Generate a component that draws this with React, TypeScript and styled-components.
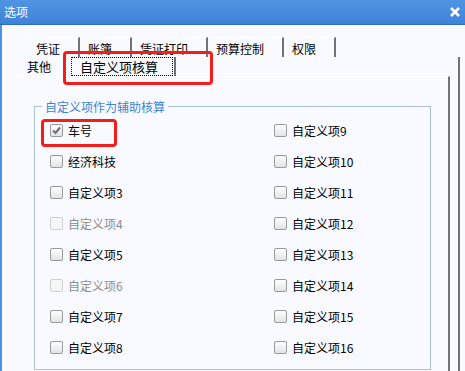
import { createGlobalStyle, styled } from "styled-components";

const GlobalStyle = createGlobalStyle`
  html, body {
    margin: 0;
    padding: 0;
    background: #f8faff;
  }
  body {
    font-family: "Noto Sans CJK SC", "Noto Sans", sans-serif;
    font-size: 12px;
    color: #000;
  }
`;

const topTabs = ["凭证", "账簿", "凭证打印", "预算控制", "权限"];

const items = [
  { label: "车号", checked: true },
  { label: "自定义项9" },
  { label: "经济科技" },
  { label: "自定义项10" },
  { label: "自定义项3" },
  { label: "自定义项11" },
  { label: "自定义项4", disabled: true },
  { label: "自定义项12" },
  { label: "自定义项5" },
  { label: "自定义项13" },
  { label: "自定义项6", disabled: true },
  { label: "自定义项14" },
  { label: "自定义项7" },
  { label: "自定义项15" },
  { label: "自定义项8" },
  { label: "自定义项16" },
];

const Check = ({ checked, disabled }: { checked?: boolean; disabled?: boolean }) => (
  <Box $disabled={disabled}>
    {checked && (
      <svg width="11" height="11" viewBox="0 0 11 11">
        <path d="M2 5.5 L4.5 8 L9 2.5" fill="none" stroke="#6f6f6f" strokeWidth="2" />
      </svg>
    )}
  </Box>
);

const App = () => {
  return (
    <Window>
      <GlobalStyle />
      <TitleBar>
        <Title>选项</Title>
        <svg width="10" height="10" viewBox="0 0 10 10">
          <path d="M1 1 L9 9 M9 1 L1 9" stroke="#fff" strokeWidth="2.6" />
        </svg>
      </TitleBar>
      <Body>
        <TopRow>
          {topTabs.map((t) => (
            <Tab key={t}>{t}</Tab>
          ))}
        </TopRow>
        <Sheet>
          <SecondRow>
            <Tab2>其他</Tab2>
            <Tab2 $active>
              <Focus>自定义项核算</Focus>
            </Tab2>
          </SecondRow>
          <Panel>
            <Group>
              <Legend>自定义项作为辅助核算</Legend>
              <Grid>
                {items.map((it) => (
                  <Item key={it.label} $disabled={it.disabled}>
                    <Check checked={it.checked} disabled={it.disabled} />
                    {it.label}
                  </Item>
                ))}
              </Grid>
            </Group>
          </Panel>
        </Sheet>
      </Body>
      <Mark style={{ left: 63, top: 51, width: 150, height: 34 }} />
      <Mark style={{ left: 41, top: 119, width: 76, height: 28 }} />
    </Window>
  );
};

export default App;

const Window = styled.div`
  position: relative;
  width: 465px;
  height: 371px;
  overflow: hidden;
  background: #f8faff;
  box-sizing: border-box;
`;

const TitleBar = styled.div`
  height: 25px;
  box-sizing: border-box;
  display: flex;
  align-items: center;
  justify-content: space-between;
  padding: 0 5px 1px 4px;
  background: linear-gradient(#4f95e4, #3d82d8);
  border-bottom: 1px solid #2f6fc2;
`;

const Title = styled.span`
  color: #fff;
  font-size: 12px;
  line-height: 17px;
`;

const Body = styled.div`
  height: 346px;
  box-sizing: border-box;
  border-left: 2px solid #4a93e8;
  padding-top: 12px;
`;

const TopRow = styled.div`
  display: flex;
  height: 20px;
  margin-left: 26px;
`;

const Tab = styled.div`
  display: flex;
  align-items: center;
  padding: 1px 18px 0 8px;
  font-size: 12px;
  line-height: 17px;
  border-top: 1px solid #ffffff;
  border-right: 2px solid #727272;
`;

const Sheet = styled.div`
  margin-left: 16px;
  width: 442px;
  box-sizing: border-box;
  border-right: 2px solid #727272;
  display: flex;
  flex-direction: column;
  height: 326px;
`;

const SecondRow = styled.div`
  display: flex;
  height: 19px;
`;

const Tab2 = styled.div<{ $active?: boolean }>`
  display: flex;
  align-items: center;
  font-size: 12px;
  line-height: 17px;
  padding: ${({ $active }) => ($active ? "0 0 0 3px" : "0 0 0 9px")};
  width: ${({ $active }) => ($active ? "103px" : "41px")};
  border-right: ${({ $active }) => ($active ? "2px solid #727272" : "none")};
`;

const Focus = styled.span`
  display: flex;
  align-items: center;
  height: 17px;
  padding: 0 14px 0 8px;
  font-size: 13px;
  border: 1px dotted #000;
`;

const Panel = styled.div`
  flex: 1;
  margin-right: 8px;
  border-top: 1px solid #ffffff;
  border-right: 2px solid #727272;
  padding: 21px 0 0 16px;
`;

const Group = styled.fieldset`
  margin: 0;
  width: 397px;
  box-sizing: border-box;
  border: 1px solid #a9c0d7;
  padding: 0 0 6px 15px;
`;

const Legend = styled.legend`
  margin-left: -8px;
  padding: 0 3px;
  color: #3b84d8;
  font-size: 12px;
  line-height: 17px;
`;

const Grid = styled.div`
  display: grid;
  grid-template-columns: 224px 1fr;
  grid-auto-rows: 31px;
`;

const Item = styled.label<{ $disabled?: boolean }>`
  display: flex;
  align-items: center;
  gap: 5px;
  font-size: 12px;
  line-height: 17px;
  color: ${({ $disabled }) => ($disabled ? "#8c8c8c" : "#000")};
`;

const Box = styled.span<{ $disabled?: boolean }>`
  width: 13px;
  height: 13px;
  box-sizing: border-box;
  border-radius: 2px;
  border: 1px solid ${({ $disabled }) => ($disabled ? "#cfcfcf" : "#9a9a9a")};
  background: ${({ $disabled }) =>
    $disabled ? "#f6f6f6" : "linear-gradient(#fdfdfd, #e4e4e4)"};
  display: flex;
  align-items: center;
  justify-content: center;
`;

const Mark = styled.div`
  position: absolute;
  box-sizing: border-box;
  border: 3px solid #f51c1c;
  border-radius: 4px;
  pointer-events: none;
`;
